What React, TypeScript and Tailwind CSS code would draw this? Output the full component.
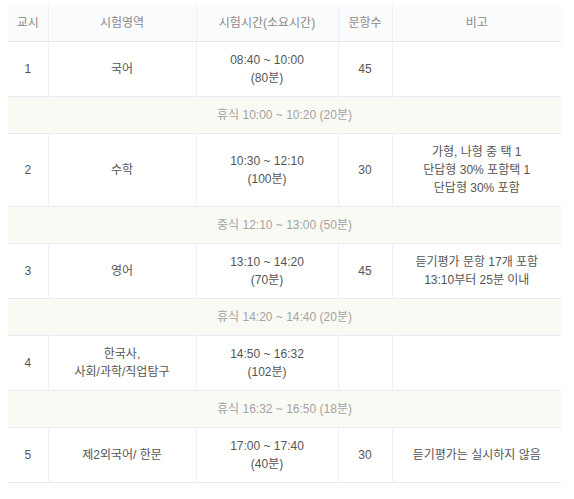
import React from 'react';

type Row =
  | { kind: 'exam'; no: string; subject: string[]; time: string; mins: string; count: string; note: string[] }
  | { kind: 'break'; text: string };

const rows: Row[] = [
  { kind: 'exam', no: '1', subject: ['국어'], time: '08:40 ~ 10:00', mins: '(80분)', count: '45', note: [] },
  { kind: 'break', text: '휴식 10:00 ~ 10:20 (20분)' },
  {
    kind: 'exam',
    no: '2',
    subject: ['수학'],
    time: '10:30 ~ 12:10',
    mins: '(100분)',
    count: '30',
    note: ['가형, 나형 중 택 1', '단답형 30% 포함택 1', '단답형 30% 포함'],
  },
  { kind: 'break', text: '중식 12:10 ~ 13:00 (50분)' },
  {
    kind: 'exam',
    no: '3',
    subject: ['영어'],
    time: '13:10 ~ 14:20',
    mins: '(70분)',
    count: '45',
    note: ['듣기평가 문항 17개 포함', '13:10부터 25분 이내'],
  },
  { kind: 'break', text: '휴식 14:20 ~ 14:40 (20분)' },
  { kind: 'exam', no: '4', subject: ['한국사,', '사회/과학/직업탐구'], time: '14:50 ~ 16:32', mins: '(102분)', count: '', note: [] },
  { kind: 'break', text: '휴식 16:32 ~ 16:50 (18분)' },
  { kind: 'exam', no: '5', subject: ['제2외국어/ 한문'], time: '17:00 ~ 17:40', mins: '(40분)', count: '30', note: ['듣기평가는 실시하지 않음'] },
];

const headers = ['교시', '시험영역', '시험시간(소요시간)', '문항수', '비고'];

export default function App() {
  return (
    <div className="bg-white w-[574px] h-[499px] pt-[5px] pl-[8px] font-['Liberation_Sans','Noto_Sans_CJK_KR',sans-serif] text-[12px] leading-[18px]">
      <table className="w-[553px] border-collapse table-fixed text-center">
        <colgroup>
          <col className="w-[40px]" />
          <col className="w-[148px]" />
          <col className="w-[142px]" />
          <col className="w-[54px]" />
          <col className="w-[169px]" />
        </colgroup>
        <thead>
          <tr className="bg-[#fafbfc] border-b border-[#e4e6eb]">
            {headers.map((h, i) => (
              <th
                key={h}
                className={`h-[36px] py-0 font-normal text-[#8a8a8a] ${i < 4 ? 'border-r border-[#eef0f5]' : ''}`}
              >
                {h}
              </th>
            ))}
          </tr>
        </thead>
        <tbody className="text-[#555]">
          {rows.map((r, idx) =>
            r.kind === 'break' ? (
              <tr key={idx} className="bg-[#fafaf5] border-b border-[#e9ebf0]">
                <td colSpan={5} className="h-[37px] text-[#a3a3a3]">
                  {r.text}
                </td>
              </tr>
            ) : (
              <tr key={idx} className="border-b border-[#e9ebf0]">
                <td className="h-[55px] py-[9px] border-r border-[#eef0f5]">{r.no}</td>
                <td className="py-[9px] border-r border-[#eef0f5]">
                  {r.subject.map((s) => (
                    <div key={s}>{s}</div>
                  ))}
                </td>
                <td className="py-[9px] border-r border-[#eef0f5]">
                  <div>{r.time}</div>
                  <div>{r.mins}</div>
                </td>
                <td className="py-[9px] border-r border-[#eef0f5]">{r.count}</td>
                <td className="py-[9px]">
                  {r.note.map((n) => (
                    <div key={n}>{n}</div>
                  ))}
                </td>
              </tr>
            )
          )}
        </tbody>
      </table>
    </div>
  );
}
